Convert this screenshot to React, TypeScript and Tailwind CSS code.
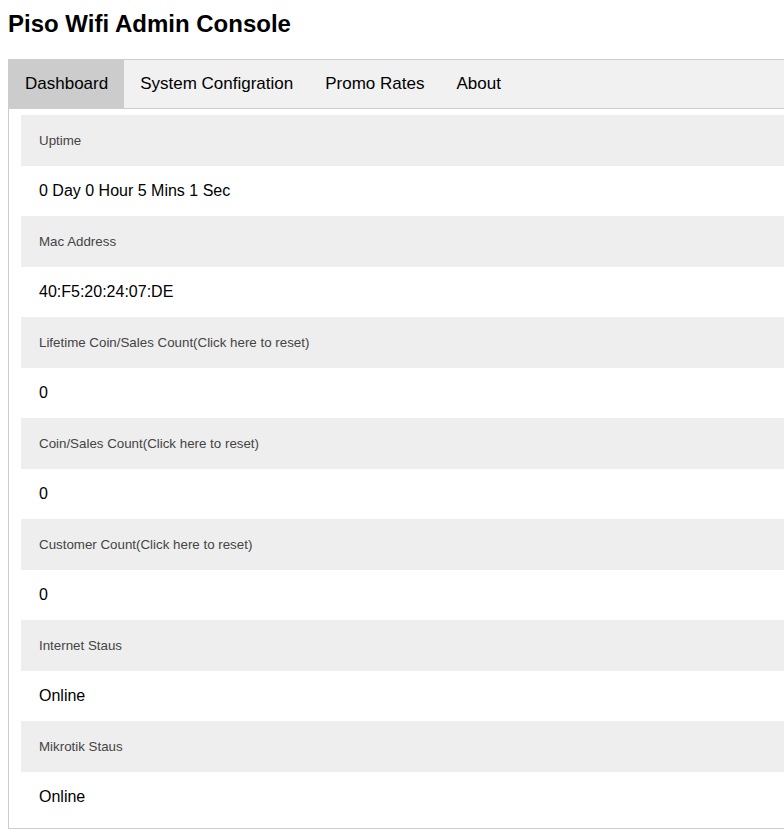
import { useState } from "react";

const tabs = ["Dashboard", "System Configration", "Promo Rates", "About"];

const stats = [
  { label: "Uptime", value: "0 Day 0 Hour 5 Mins 1 Sec" },
  { label: "Mac Address", value: "40:F5:20:24:07:DE" },
  { label: "Lifetime Coin/Sales Count(Click here to reset)", value: "0" },
  { label: "Coin/Sales Count(Click here to reset)", value: "0" },
  { label: "Customer Count(Click here to reset)", value: "0" },
  { label: "Internet Staus", value: "Online" },
  { label: "Mikrotik Staus", value: "Online" },
];

export default function App() {
  const [active, setActive] = useState("Dashboard");

  return (
    <div className="w-[784px] h-[833px] overflow-hidden bg-white font-['Liberation_Sans',Arial,sans-serif] text-black">
      <div className="w-[1000px] px-2">
        <h2 className="mt-[10px] mb-[21px] text-[24px] leading-[28px] font-bold">Piso Wifi Admin Console</h2>

        <div className="flex border border-[#ccc] bg-[#f1f1f1]">
          {tabs.map((t) => (
            <button
              key={t}
              onClick={() => setActive(t)}
              className={`px-4 h-[48px] text-[17px] ${active === t ? "bg-[#ccc]" : "bg-[#f1f1f1] hover:bg-[#ddd]"}`}
            >
              {t}
            </button>
          ))}
        </div>

        <div className="border border-t-0 border-[#ccc] px-3 py-[6px]">
          {stats.map((s) => (
            <div key={s.label}>
              <div className="h-[51px] flex items-center pl-[18px] bg-[#eee] text-[13.33px] text-[#444]">{s.label}</div>
              <div className="h-[50px] flex items-center pl-[18px] text-[16px]">{s.value}</div>
            </div>
          ))}
        </div>
      </div>
    </div>
  );
}
